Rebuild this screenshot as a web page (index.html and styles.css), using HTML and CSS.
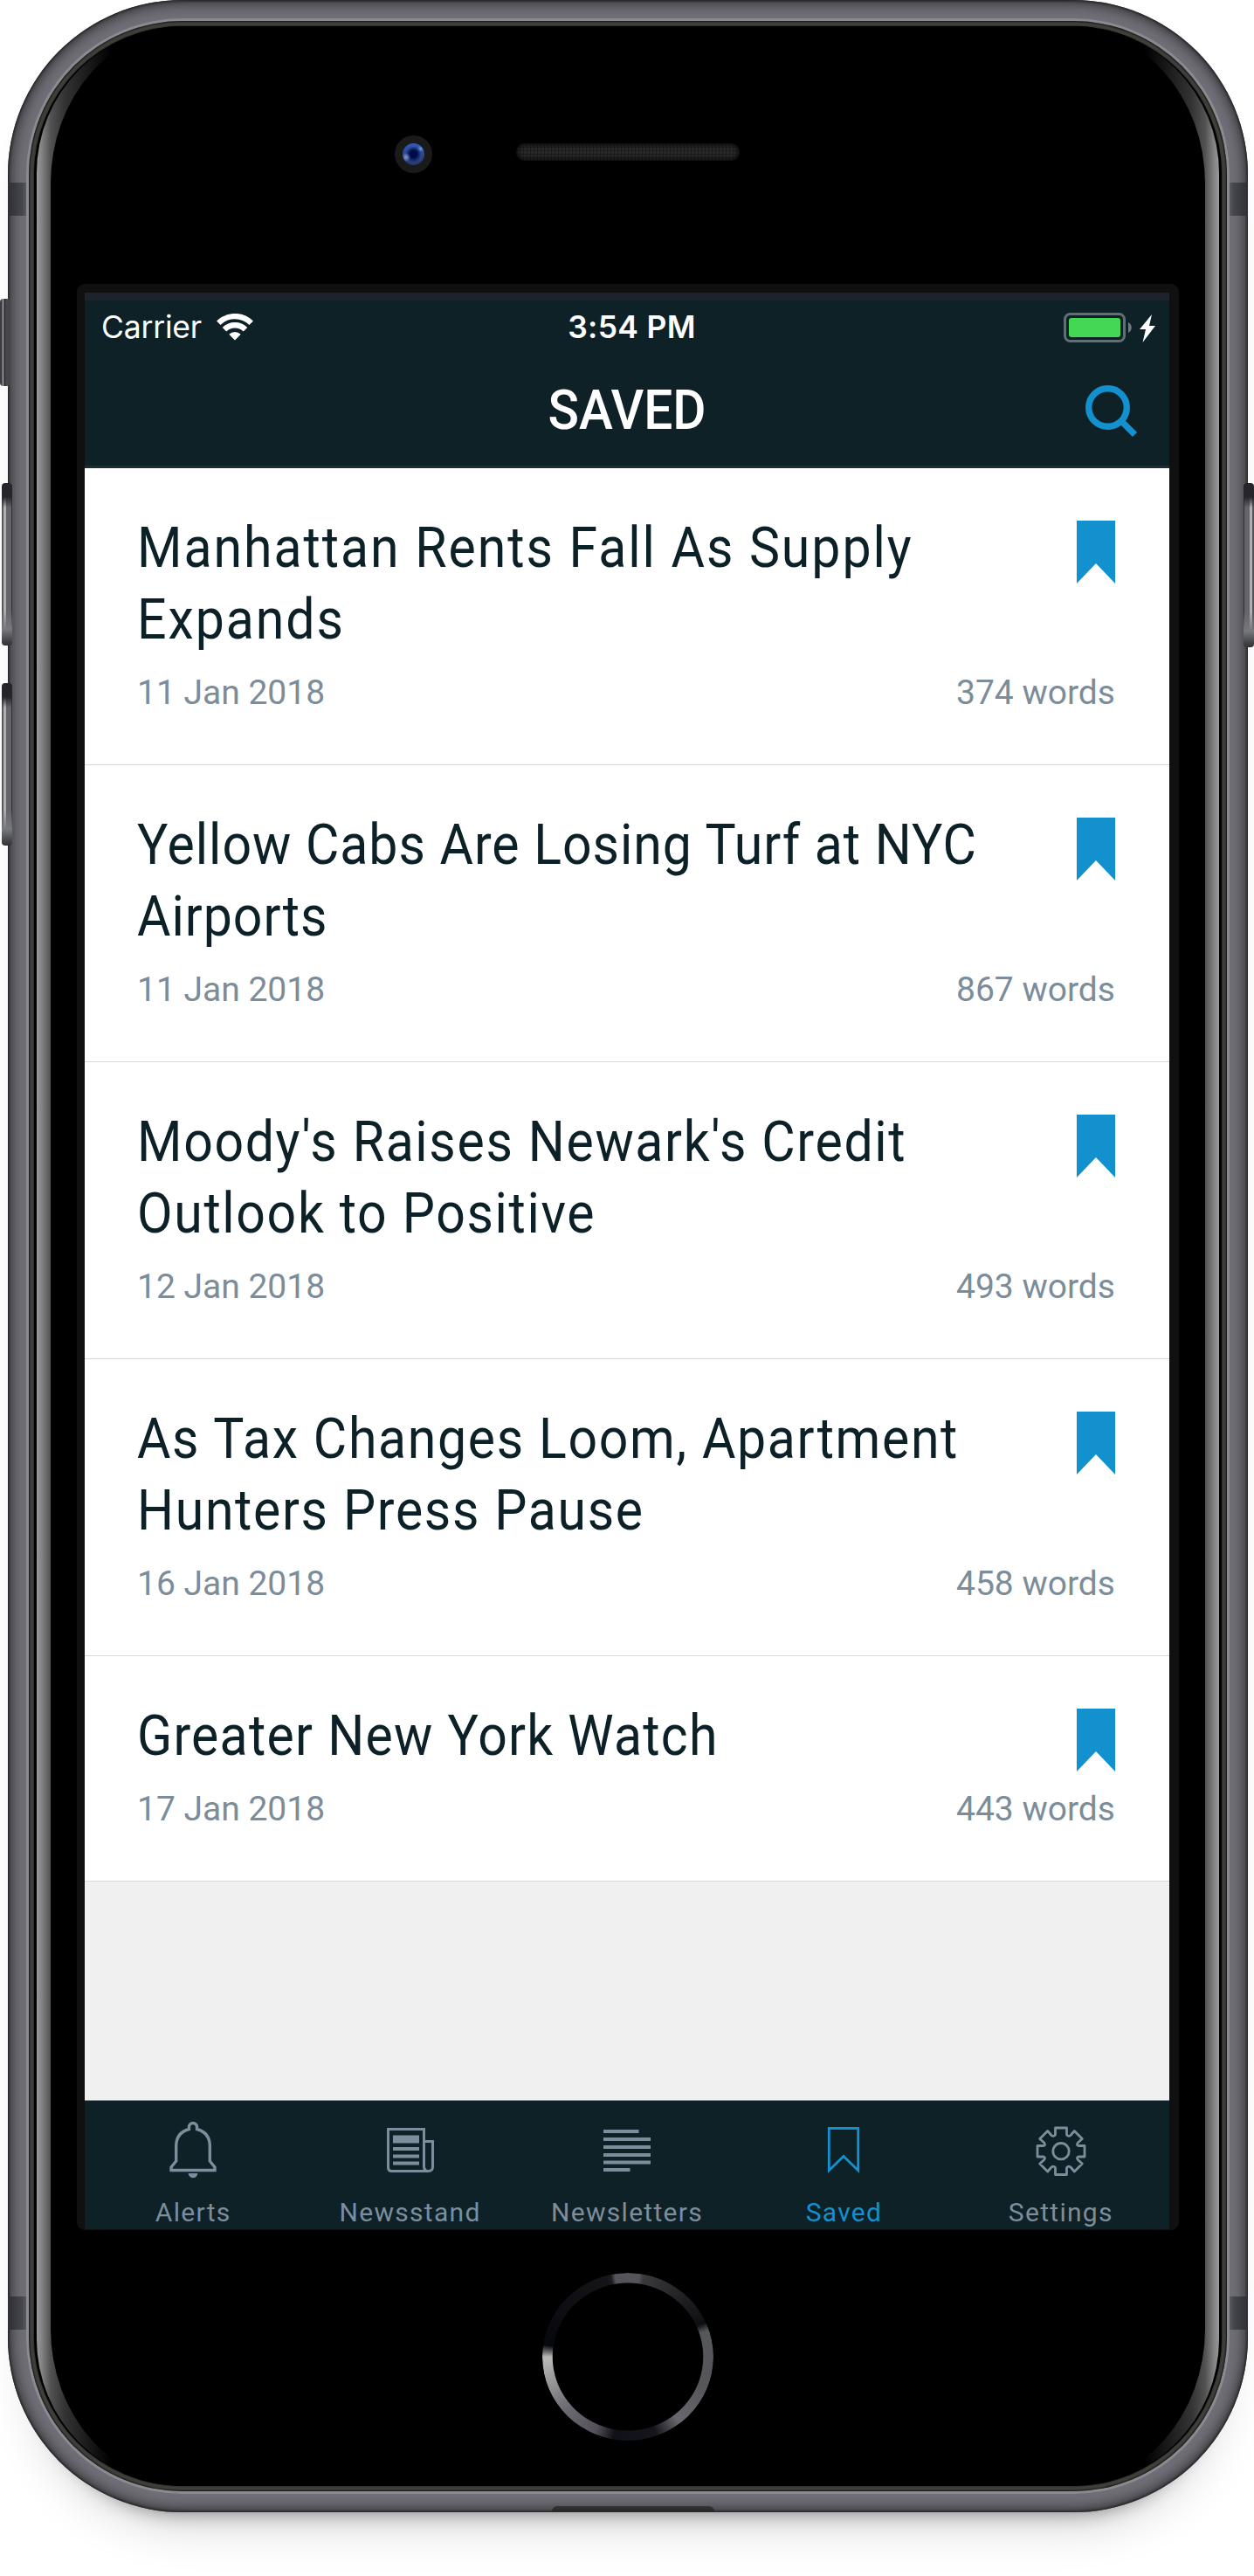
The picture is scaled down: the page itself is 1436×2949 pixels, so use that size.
FILE: index.html
```html
<!DOCTYPE html>
<html lang="en">
<head>
<meta charset="utf-8">
<title>Saved</title>
<link rel="stylesheet" href="styles.css">
</head>
<body>
<div class="phone">
  <i class="key key-mute"></i>
  <i class="key key-up"></i>
  <i class="key key-down"></i>
  <i class="key key-power"></i>
  <i class="antenna antenna-top"></i>
  <i class="antenna antenna-bottom"></i>
  <i class="chin"></i>
  <div class="lip"><div class="seam"><div class="glass"><div class="glare"><div class="face">
    <div class="sensors">
      <i class="camera"></i>
      <i class="speaker"></i>
    </div>
    <div class="bezel">
      <main class="screen">
        <header class="header">
          <div class="status">
            <div class="status-left">
              <span class="carrier">Carrier</span>
              <svg class="wifi" width="42" height="31" viewBox="0 0 42 31"><g fill="none" stroke="#fff" stroke-width="6.4"><path d="M2.3 10.8a26.6 26.6 0 0 1 37.4 0"/><path d="M9 18.2a17 17 0 0 1 24 0"/></g><path d="M14.3 23.8a9.6 9.6 0 0 1 13.4 0L21 30.6z" fill="#fff"/></svg>
            </div>
            <span class="time">3:54 PM</span>
            <div class="status-right">
              <svg width="106" height="36" viewBox="0 0 106 36"><rect x="1.5" y="2.5" width="68" height="31" rx="6" fill="none" stroke="#5f6f74" stroke-width="3"/><rect x="6" y="7" width="59" height="22" rx="3" fill="#44d754"/><path d="M74 12c5 2 5 10 0 12z" fill="#6b7a7e"/><path d="M101 3L87 20h7l-3.500 15L105 16h-7z" fill="#fff"/></svg>
            </div>
          </div>
          <div class="nav">
            <h1>SAVED</h1>
            <svg class="search" width="62" height="62" viewBox="0 0 62 62"><circle cx="26.500" cy="26.500" r="21.800" fill="none" stroke="#1391cf" stroke-width="7.400"/><path d="M42 42L57.500 57.500" stroke="#1391cf" stroke-width="7.400"/></svg>
          </div>
        </header>
        <section class="list">
          <article class="item">
            <div class="row"><h2 class="loose">Manhattan Rents Fall As Supply<br>Expands</h2><i class="mark"></i></div>
            <div class="meta"><span>11 Jan 2018</span><span>374 words</span></div>
          </article>
          <article class="item">
            <div class="row"><h2 class="tight">Yellow Cabs Are Losing Turf at NYC<br>Airports</h2><i class="mark"></i></div>
            <div class="meta"><span>11 Jan 2018</span><span>867 words</span></div>
          </article>
          <article class="item">
            <div class="row"><h2>Moody's Raises Newark's Credit<br>Outlook to Positive</h2><i class="mark"></i></div>
            <div class="meta"><span>12 Jan 2018</span><span>493 words</span></div>
          </article>
          <article class="item">
            <div class="row"><h2>As Tax Changes Loom, Apartment<br>Hunters Press Pause</h2><i class="mark"></i></div>
            <div class="meta"><span>16 Jan 2018</span><span>458 words</span></div>
          </article>
          <article class="item">
            <div class="row"><h2 class="snug">Greater New York Watch</h2><i class="mark"></i></div>
            <div class="meta"><span>17 Jan 2018</span><span>443 words</span></div>
          </article>
        </section>
        <nav class="tabs">
          <a class="tab">
            <svg width="64" height="68" viewBox="0 0 64 68"><g fill="none" stroke="currentColor" stroke-width="3.400"><path d="M27.500 11.500V9a4.500 4.500 0 0 1 9 0v2.500C46 14 51.300 21 51.300 31v17l5.700 7v3.500H7V55l5.700-7V31c0-10 5.300-17 14.800-19.500z"/></g><path d="M26.500 62h11c-1 7-10 7-11 0z" fill="currentColor"/></svg>
            <span>Alerts</span>
          </a>
          <a class="tab">
            <svg width="64" height="68" viewBox="0 0 64 68"><g fill="none" stroke="currentColor" stroke-width="3"><path d="M47.500 51V11.500H6.500V55q0 4.500 4 4.500h42q5 0 5-5V25.500h-10"/><path d="M47.500 50v4q0 5 4.500 5.500"/></g><path d="M12 18.500h30v9H12zM12 32h30v4H12zM12 40.500h30v4H12zM12 48.500h30v4H12z" fill="currentColor"/></svg>
            <span>Newsstand</span>
          </a>
          <a class="tab">
            <svg width="64" height="68" viewBox="0 0 64 68"><path d="M5 12h40.500v4H5zM5 21h54v4H5zM5 30h54v4H5zM5 39h54v4H5zM5 47.500h54v4H5zM5 56h30.500v4H5z" fill="currentColor"/></svg>
            <span>Newsletters</span>
          </a>
          <a class="tab active">
            <svg width="64" height="68" viewBox="0 0 64 68"><path d="M15.300 10.500h33.400v48.300L32 42.500 15.300 58.800z" fill="none" stroke="currentColor" stroke-width="2.800"/></svg>
            <span>Saved</span>
          </a>
          <a class="tab">
            <svg width="64" height="68" viewBox="0 0 64 68"><g fill="none" stroke="currentColor" stroke-width="2.800" stroke-linejoin="round"><path d="M25.500 10h13v8q2 2.500 4.500.5l4.300-5 9 9-5 4.500q-2 2.500.7 3.500H59v12.500h-7q-2.700 1-.7 3.500l5 4.500-9 9-4.300-5q-2.500-2-4.500.5v8h-13v-8q-2-2.500-4.500-.5l-4.300 5-9-9 5-4.500q2-2.500-.7-3.500H5V30.500h7q2.700-1 .7-3.500l-5-4.500 9-9 4.300 5q2.500 2 4.500-.5z"/><circle cx="32" cy="36.700" r="9.200"/></g></svg>
            <span>Settings</span>
          </a>
        </nav>
      </main>
    </div>
    <div class="home"></div>
  </div></div></div></div></div>
</div>
</body>
</html>
```
FILE: styles.css
```css
* { box-sizing: border-box; }

body {
  margin: 0;
  background: #fff;
  font-family: Roboto, "Liberation Sans", sans-serif;
  height: 2949px;
  overflow: hidden;
}

/* Device shell */
.phone {
  position: relative;
  width: 1420px;
  height: 2876px;
  margin-left: 9px;
  padding: 21px;
  border-radius: 200px;
  background: #706e76;
  box-shadow:
    inset 0 0 3px 1px #1c1c1c,
    inset 0 0 15px 3px #2b2b2d,
    0 42px 20px -40px rgba(0, 0, 0, .34),
    0 44px 60px -38px rgba(0, 0, 0, .24);
}

.lip {
  height: 100%;
  padding: 3px;
  border-radius: 179px;
  background: #8b8a91;
}

.seam {
  height: 100%;
  padding: 6px;
  border-radius: 176px;
  background: #40403c;
  box-shadow: inset 0 0 2px 1px #141412;
}

.glass {
  height: 100%;
  padding: 0 3px;
  border-radius: 170px;
  background: #000;
  box-shadow: 0 0 2px #000;
}

.glare {
  height: 100%;
  padding: 0 16px;
  border-radius: 168px;
  background: linear-gradient(90deg, #999 0, #828282 6px, #525252 16px, #333 32px, #000 86px, #000 calc(100% - 86px), #333 calc(100% - 32px), #525252 calc(100% - 16px), #828282 calc(100% - 6px), #999 100%);
}

.face {
  height: 100%;
  border-radius: 160px / 180px;
  background: #000;
}

.key {
  position: absolute;
  border-radius: 4px;
  width: 12px;
}

.key-mute {
  left: -9px;
  top: 342px;
  height: 100px;
  background: linear-gradient(90deg, #3a3a3d 0 2px, #74747c 2px 5px, #1d1d1f 5px 6px, #47474a 6px);
}

.key-up, .key-down, .key-power {
  height: 186px;
  background:
    linear-gradient(#26252b 0 16px, transparent 28px, transparent 78%, #77787c 90%, #303034 100%),
    linear-gradient(90deg, #57575a 0 2px, #b0b0b0 2px 5px, #64646b 5px 11px, #303034 11px);
}

.key-up { left: -7px; top: 553px; }
.key-down { left: -7px; top: 782px; }
.key-power { right: -7px; top: 553px; height: 188px; transform: scaleX(-1); }

.antenna {
  position: absolute;
  left: 0;
  right: 0;
  height: 38px;
  background: linear-gradient(90deg, #2f3035, #44464b 16px, #64646c 24px, transparent 24px calc(100% - 24px), #64646c calc(100% - 24px), #44464b calc(100% - 16px), #2f3035);
}

.antenna-top { top: 209px; }
.antenna-bottom { top: 2629px; }

.chin {
  position: absolute;
  left: 623px;
  bottom: 1px;
  width: 186px;
  height: 6px;
  border-radius: 8px 8px 0 0;
  background: linear-gradient(#353536, #262626);
}

.lip, .antenna, .chin { isolation: isolate; }

/* Sensors above the display */
.sensors {
  display: flex;
  align-items: flex-start;
  height: 295px;
  padding: 125px 0 0 394px;
}

.camera {
  width: 43px;
  height: 43px;
  border: 9px solid #1a1a1a;
  border-radius: 50%;
  background:
    radial-gradient(circle at 21px 6px, #5aa0e0 0, transparent 4px),
    radial-gradient(circle at 4px 16px, #7f9fd0 0, transparent 5px),
    radial-gradient(circle, #000b48 0 4px, transparent 9px),
    linear-gradient(#3558b4, #26386e);
  background-origin: padding-box;
}

.speaker {
  margin: 9px 0 0 96px;
  width: 256px;
  height: 20px;
  border-radius: 10px;
  background:
    repeating-linear-gradient(90deg, rgba(0, 0, 0, .25) 0 1px, transparent 1px 4px),
    repeating-linear-gradient(rgba(0, 0, 0, .25) 0 1px, transparent 1px 4px),
    #282828;
  box-shadow: inset 0 0 4px 2px #0b0b0b;
}

/* Display */
.bezel {
  width: 1262px;
  height: 2228px;
  margin-left: 30px;
  padding: 10px 11px 1px 9px;
  border-radius: 9px;
  background: #101010;
}

.screen {
  display: flex;
  flex-direction: column;
  height: 100%;
  border-top: 9px solid #1e222a;
  background: #f0f0f0;
}

.header {
  height: 192px;
  border-bottom: 3px solid #1b2e34;
  background: #0e2127;
  color: #fff;
}

.status {
  display: grid;
  grid-template-columns: 1fr auto 1fr;
  align-items: center;
  height: 61px;
  padding: 0 15px 0 19px;
  font: 35.500px/61px Inter, "Liberation Sans", sans-serif;
}

.status-left { display: flex; align-items: center; gap: 17px; }
.carrier { letter-spacing: -.2px; }
.time { font-weight: 600; letter-spacing: .3px; padding-left: 7px; }
.status-right { display: flex; justify-content: flex-end; }

.nav {
  display: grid;
  grid-template-columns: 62px 1fr 62px;
  align-items: center;
  height: 128px;
  padding: 0 35px;
}

.nav h1 {
  grid-column: 2;
  margin: 0;
  font-size: 63px;
  font-weight: 500;
  line-height: 130px;
  text-align: center;
  transform: scaleX(.93);
}

.search { margin-top: 2px; }

.item {
  padding: 50px 62px 44px 60px;
  border-bottom: 1px solid #d5d8d9;
  background: #fff;
}

.row { display: flex; }

.row h2 {
  flex: 1;
  min-width: 0;
  margin: 0;
  font-size: 65.500px;
  font-weight: 400;
  line-height: 82px;
  letter-spacing: 1.850px;
  white-space: nowrap;
  color: #0c2127;
  transform: scaleX(.9);
  transform-origin: 0 0;
}

.row h2.loose { letter-spacing: 2.200px; }
.row h2.snug { letter-spacing: 1.400px; }
.row h2.tight { letter-spacing: 1.100px; }

.mark {
  flex: none;
  width: 44px;
  height: 72px;
  margin-top: 10px;
  background: #1391cf;
  clip-path: polygon(0 0, 100% 0, 100% 100%, 50% 68%, 0 100%);
}

.meta {
  display: flex;
  justify-content: space-between;
  height: 81px;
  padding-top: 5px;
  font-size: 39px;
  line-height: 76px;
  color: #7b8c9b;
}

.tabs {
  display: flex;
  height: 148px;
  margin-top: auto;
  border-top: 1px solid #8b9597;
  background: #0e2127;
  color: #7c8d9c;
}

.tab {
  flex: 1;
  display: flex;
  flex-direction: column;
  align-items: center;
  padding-top: 21px;
  font-size: 30px;
  line-height: 36px;
  letter-spacing: 1.300px;
}

.tab span { margin-top: 21px; }
.tab.active { color: #1391cf; }

/* Home button */
.home {
  width: 196px;
  height: 192px;
  margin: 49px auto 0;
  border-radius: 50%;
  background: conic-gradient(#555458 0deg 8deg, #3a393c 11deg, #111116 62deg, #0d0e13 66deg, #57585c 72deg, #55555a 110deg, #68676d 142deg, #15161b 160deg, #101217 190deg, #55515a 204deg, #6c6a71 230deg, #b7b7b5 268deg, #b7b7b5 270deg, #07080e 278deg, #151418 345deg, #1b1b1e 348deg, #555458 351deg);
  mask: radial-gradient(closest-side, transparent 87.500%, #000 88.500%);
}
```
